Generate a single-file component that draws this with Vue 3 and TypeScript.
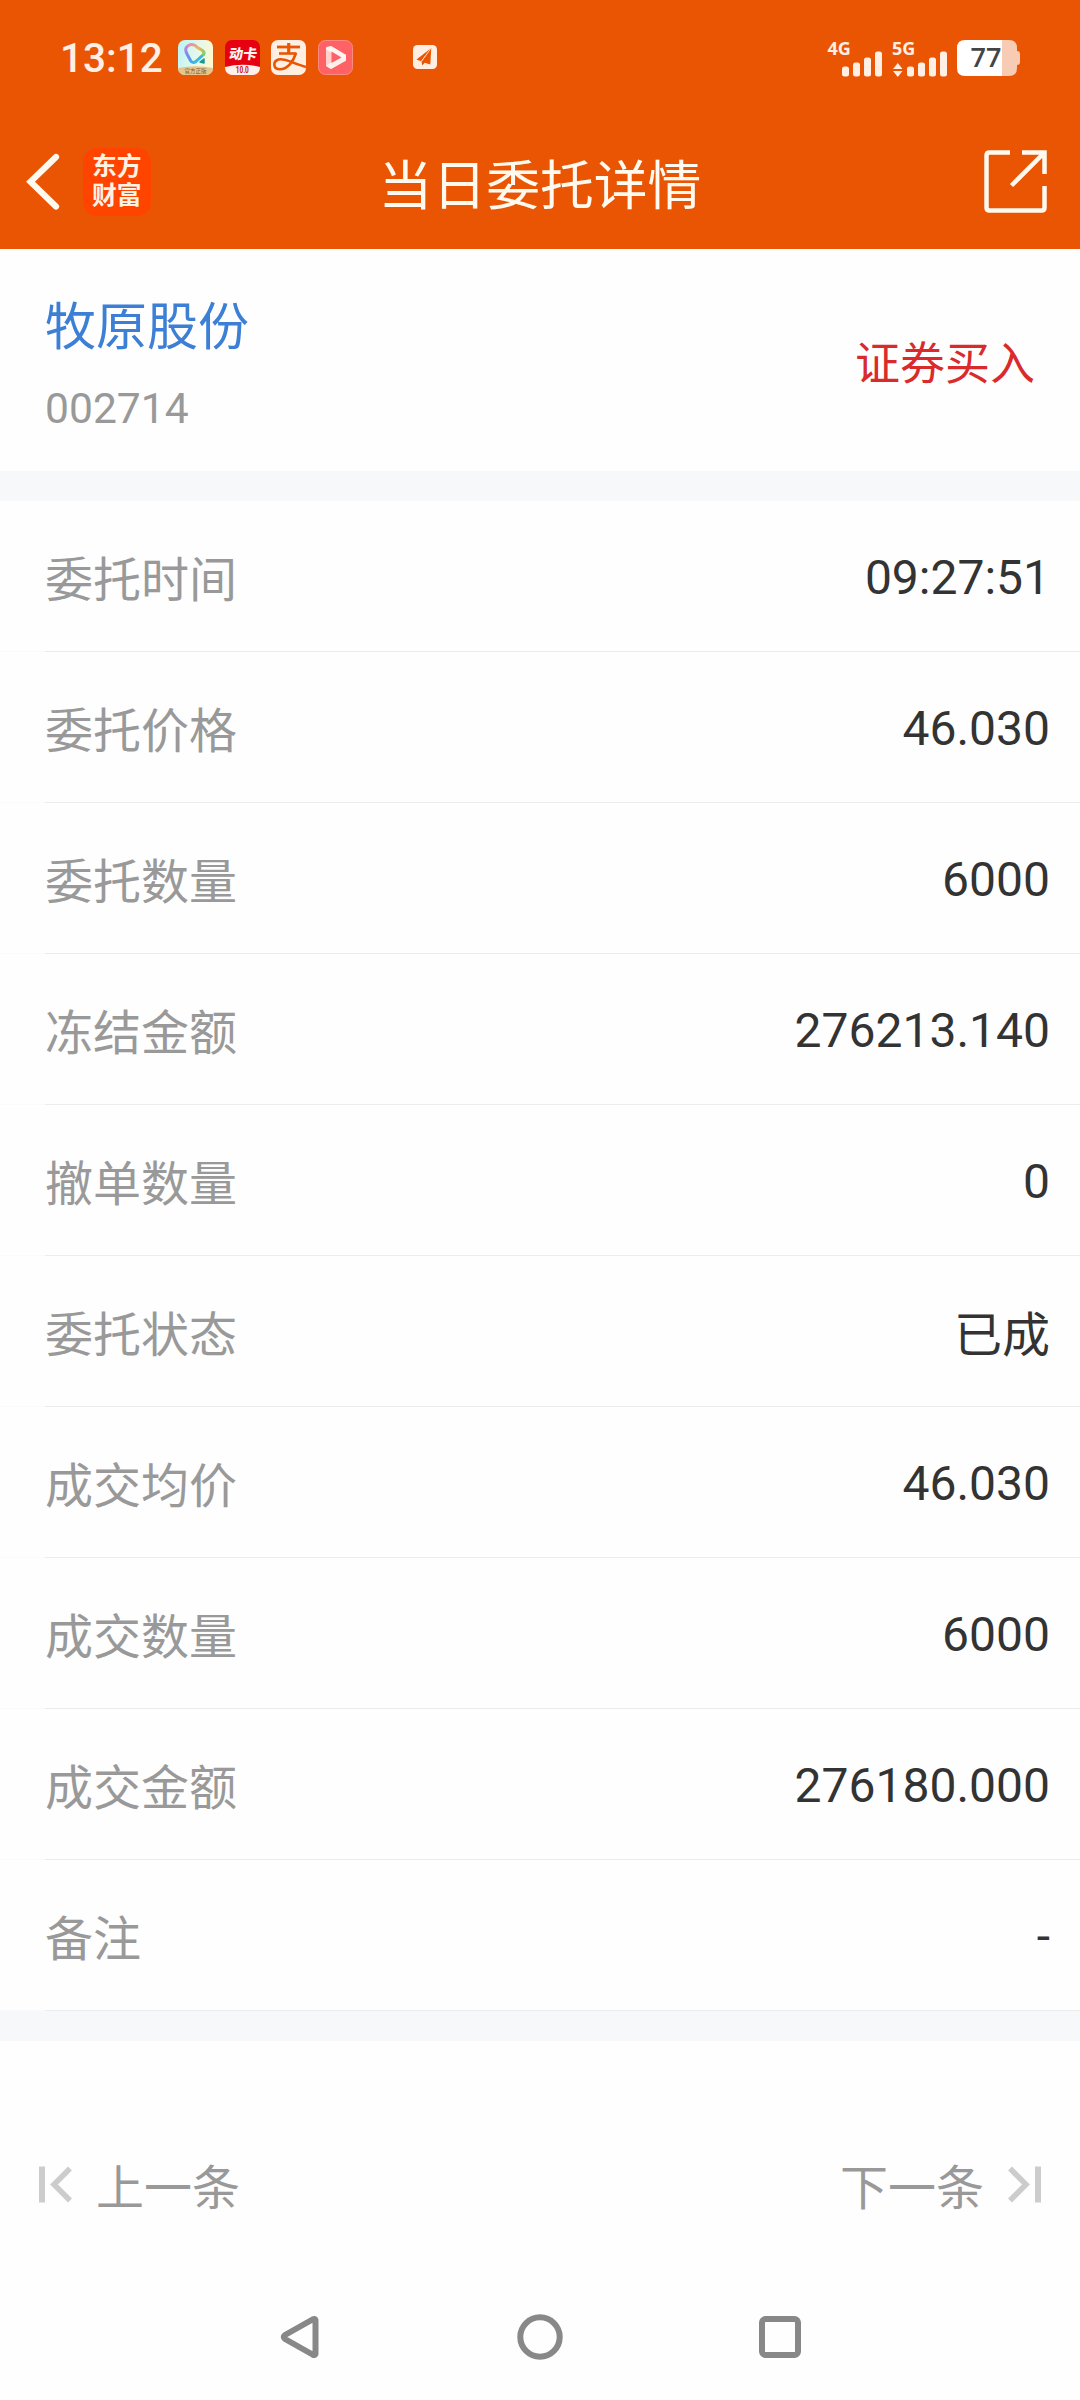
<script setup lang="ts">
interface DetailRow {
  label: string
  value: string
  cjk?: boolean
}

const rows: DetailRow[] = [
  { label: '委托时间', value: '09:27:51' },
  { label: '委托价格', value: '46.030' },
  { label: '委托数量', value: '6000' },
  { label: '冻结金额', value: '276213.140' },
  { label: '撤单数量', value: '0' },
  { label: '委托状态', value: '已成', cjk: true },
  { label: '成交均价', value: '46.030' },
  { label: '成交数量', value: '6000' },
  { label: '成交金额', value: '276180.000' },
  { label: '备注', value: '-' },
]
</script>

<template>
  <div class="screen">
    <header class="top">
      <div class="status">
        <span class="clock">13:12</span>
        <div class="apps">
          <svg width="35" height="35" viewBox="0 0 35 35">
            <defs>
              <linearGradient id="tile" x1="0" y1="0" x2="1" y2="0.3">
                <stop offset="0" stop-color="#b9f3f5" />
                <stop offset="0.6" stop-color="#e4f8ec" />
                <stop offset="1" stop-color="#fbf8d2" />
              </linearGradient>
              <linearGradient id="loop" x1="0" y1="0" x2="0.7" y2="1">
                <stop offset="0" stop-color="#c58be0" />
                <stop offset="0.35" stop-color="#8a86ea" />
                <stop offset="0.7" stop-color="#4f9cf0" />
                <stop offset="1" stop-color="#35c8d8" />
              </linearGradient>
              <linearGradient id="loopWarm" x1="0" y1="0" x2="1" y2="1">
                <stop offset="0" stop-color="#e58ab8" />
                <stop offset="0.5" stop-color="#f0b35c" />
                <stop offset="1" stop-color="#6fd46a" />
              </linearGradient>
              <clipPath id="tileClip"><rect width="35" height="35" rx="7" /></clipPath>
            </defs>
            <g clip-path="url(#tileClip)">
              <rect width="35" height="35" fill="url(#tile)" />
              <path d="M0 28 Q17.500 24.500 35 28 V35 H0Z" fill="#e6c48c" />
              <path d="M10.500 5.500 C6.500 7.500 7.500 11 9 14 L12.500 20.500 C14 23.500 17 23 19 20.500 L25.500 14.500" fill="none" stroke="url(#loop)" stroke-width="3" stroke-linecap="round" />
              <path d="M10.500 5.500 C14 3.500 17 5 19.500 7.500 L24.500 10.500 Q27 12.500 25.500 14.500" fill="none" stroke="url(#loopWarm)" stroke-width="3" stroke-linecap="round" />
              <path d="M22 22 L26 19 V23Z" fill="#169a9a" stroke="#169a9a" stroke-width="1.500" stroke-linejoin="round" />
              <text x="17.500" y="33.300" text-anchor="middle" class="cjk-text" font-size="5.500" fill="#7a5a2c">官方正版</text>
            </g>
          </svg>
          <svg width="35" height="35" viewBox="0 0 35 35">
            <defs><clipPath id="cardClip"><rect width="35" height="35" rx="7" /></clipPath></defs>
            <g clip-path="url(#cardClip)">
              <rect width="35" height="35" fill="#e60012" />
              <path d="M0 27 Q17.500 22.500 35 27 V35 H0Z" fill="#fff0ea" />
              <text transform="translate(17.500 18.800) skewX(-8)" text-anchor="middle" class="cjk-text" font-size="14" font-weight="900" fill="#fff3ec">动卡</text>
              <text transform="translate(17.300 33) scale(0.72 1)" text-anchor="middle" class="num-text" font-size="9" font-weight="700" fill="#c8101c">10.0</text>
            </g>
          </svg>
          <svg width="35" height="35" viewBox="0 0 35 35">
            <rect width="35" height="35" rx="7" fill="#ffefe2" />
            <g fill="none" stroke="#ea5504">
              <path d="M6 7 H29" stroke-width="2.800" />
              <path d="M17.700 3 V13" stroke-width="3.200" />
              <path d="M8 13.500 H25.500" stroke-width="2.600" />
              <path d="M25 13 C22.500 21 17 29 9 29.300 C2 29.300 1.500 21.500 7.500 19.500 C14 18 22 23.500 35 27" stroke-width="2.600" />
            </g>
          </svg>
          <svg width="35" height="35" viewBox="0 0 35 35">
            <rect x="0.500" y="0.500" width="34" height="34" rx="7" fill="#ff6266" stroke="#ff8a80" />
            <path d="M8 7 L13 6 L28 15 V20.500 L13 29 L8 26Z" fill="#ffd0cc" />
            <path d="M13 6 L28 15 V20.500 L24.500 18.500 L8 9.500 V8Z" fill="#fff6f0" />
            <path d="M8 26 L13 29 L28 20.500 L24 16.500 L10 24Z" fill="#fff6f0" opacity="0.850" />
            <path d="M13.500 11.500 L23.500 17.500 L13.500 23Z" fill="#ff6266" />
          </svg>
        </div>
        <svg class="plane" width="24" height="24" viewBox="0 0 24 24">
          <rect width="24" height="24" rx="4.500" fill="#ffefe2" />
          <path d="M18.300 3 L3.500 14.500 L8 16.300Z M18.300 3 L8.500 16.800 L9.200 20.500 L11.700 17.800 L17.300 19.500Z" fill="#ea5504" />
          <path d="M18.300 3 L8.300 16.500" stroke="#ffefe2" stroke-width="0.700" />
        </svg>
        <svg class="signals" width="198" height="52" viewBox="-6 -6 198 52">
          <g fill="#ffefe4">
            <text x="-0.500" y="16.500" class="net-text">4G</text>
            <rect x="14" y="28.500" width="7" height="10" rx="2.500" />
            <rect x="25" y="24.500" width="7" height="14" rx="2.500" />
            <rect x="36" y="19.500" width="7" height="19" rx="2.500" />
            <rect x="47" y="13.500" width="7" height="25" rx="2.500" />
            <text x="64" y="16.500" class="net-text">5G</text>
            <path d="M65 31 L69.800 25 L74.500 31Z M65 33 L69.800 39 L74.500 33Z" />
            <rect x="79" y="28.500" width="7" height="10" rx="2.500" />
            <rect x="90" y="24.500" width="7" height="14" rx="2.500" />
            <rect x="101" y="19.500" width="7" height="19" rx="2.500" />
            <rect x="112" y="13.500" width="7" height="25" rx="2.500" />
          </g>
          <path d="M174 2 H181 Q189 2 189 10 V13 Q192 13 192 16 V24 Q192 27 189 27 V30 Q189 38 181 38 H174Z" fill="#f8ccb4" />
          <path d="M174 2 H137 Q129 2 129 10 V30 Q129 38 137 38 H174Z" fill="#fff" />
          <text x="158" y="29" text-anchor="middle" class="battery-text">77</text>
        </svg>
      </div>
      <div class="bar">
        <div class="bar-side">
          <svg class="back" width="34" height="60" viewBox="0 0 34 60">
            <path d="M30 5 L4.500 29.800 L30 54.500" fill="none" stroke="#fffaf0" stroke-width="6.200" stroke-linecap="round" />
          </svg>
          <div class="brand">东方财富</div>
        </div>
        <h1>当日委托详情</h1>
        <div class="bar-side end">
          <svg width="64" height="64" viewBox="0 0 64 64" fill="none" stroke="#fffaf0" stroke-width="4.500">
            <path d="M26 2.500 H5.500 Q2.500 2.500 2.500 5.500 V57.500 Q2.500 60.500 5.500 60.500 H57.500 Q60.500 60.500 60.500 57.500 V36" />
            <path d="M38 2.500 H60.500 V24 M60 3 L27.500 35.500" />
          </svg>
        </div>
      </div>
    </header>

    <section class="summary">
      <div>
        <div class="name">牧原股份</div>
        <div class="code">002714</div>
      </div>
      <div class="side">证券买入</div>
    </section>

    <main class="list">
      <div v-for="row in rows" :key="row.label" class="row">
        <span class="label">{{ row.label }}</span>
        <span class="value" :class="{ cjk: row.cjk }">{{ row.value }}</span>
      </div>
    </main>
    <div class="band"></div>

    <div class="pager">
      <div class="page-btn">
        <svg width="34" height="37" viewBox="0 0 34 37" fill="none" stroke="#ccc">
          <path d="M3 0.500 V36.500" stroke-width="6" />
          <path d="M31 2.500 L15 18.500 L31 34.500" stroke-width="5.500" />
        </svg>
        <span>上一条</span>
      </div>
      <div class="page-btn">
        <span>下一条</span>
        <svg width="34" height="37" viewBox="0 0 34 37" fill="none" stroke="#ccc">
          <path d="M31 0.500 V36.500" stroke-width="6" />
          <path d="M3 2.500 L19 18.500 L3 34.500" stroke-width="5.500" />
        </svg>
      </div>
    </div>

    <nav class="nav">
      <svg width="40" height="46" viewBox="0 0 40 46" fill="none" stroke="#888" stroke-width="6" stroke-linejoin="round">
        <path d="M35.500 6 Q35 4.200 32.500 5.500 L5 21 Q2.500 23 5 25 L32.500 40.500 Q35 41.800 35.500 40Z" />
      </svg>
      <svg width="46" height="46" viewBox="0 0 46 46" fill="none" stroke="#888" stroke-width="6">
        <circle cx="23" cy="23" r="19.700" />
      </svg>
      <svg width="42" height="42" viewBox="0 0 42 42" fill="none" stroke="#888" stroke-width="6">
        <rect x="3" y="3" width="36" height="36" rx="3.500" />
      </svg>
    </nav>
  </div>
</template>

<style>
body {
  margin: 0;
  background: #fefefe;
}
</style>

<style scoped>
.screen {
  width: 1080px;
  height: 2400px;
  overflow: hidden;
  display: flex;
  flex-direction: column;
  background: #fefefe;
  font-family: 'Noto Sans CJK SC', sans-serif;
}
svg {
  display: block;
  flex: none;
}
.cjk-text {
  font-family: 'Noto Sans CJK SC', sans-serif;
}
.num-text {
  font-family: Roboto, sans-serif;
}
.top {
  height: 249px;
  background: #ea5504;
}
.status {
  height: 114px;
  display: flex;
  align-items: center;
  padding: 0 60px;
}
.clock {
  width: 118px;
  padding-top: 1px;
  font: 500 40.5px/60px Roboto, sans-serif;
  color: #ffefe4;
}
.apps {
  display: flex;
  gap: 11.7px;
}
.plane {
  margin-left: 60px;
}
.signals {
  margin-left: auto;
  margin-top: 1px;
}
.net-text {
  font: 700 18px 'Open Sans', sans-serif;
}
.battery-text {
  font: 600 27px 'Open Sans', sans-serif;
  fill: #444;
}
.bar {
  height: 135px;
  display: flex;
  align-items: center;
  justify-content: space-between;
  padding: 0 32px 0 26px;
}
.bar-side {
  width: 200px;
  display: flex;
  align-items: center;
}
.bar-side.end {
  justify-content: flex-end;
}
.brand {
  box-sizing: border-box;
  width: 68px;
  height: 68px;
  margin-left: 23px;
  padding: 2px 9px 0;
  border-radius: 14px;
  background: #ff4400;
  color: #fff4e4;
  font-size: 24.8px;
  font-weight: 700;
  line-height: 29.5px;
  word-break: break-all;
}
h1 {
  margin: 0 0 0 6px;
  font-size: 53.8px;
  line-height: 80px;
  font-weight: 400;
  color: #fffaf0;
}
.summary {
  height: 222px;
  box-sizing: border-box;
  padding: 0 45px;
  display: flex;
  align-items: center;
  justify-content: space-between;
}
.name {
  font-size: 51px;
  line-height: 72px;
  color: #3c7fd5;
}
.code {
  margin: 19px 0 -5px;
  font: 42.6px/60px Roboto, sans-serif;
  color: #999;
}
.side {
  padding-top: 1px;
  font-size: 45px;
  line-height: 66px;
  color: #d92b2b;
}
.list {
  border-top: 30px solid #f6f8fa;
}
.row {
  height: 151px;
  box-sizing: border-box;
  padding: 0 30px 0 45px;
  display: flex;
  align-items: center;
  justify-content: space-between;
  font-size: 48px;
  line-height: 72px;
  background: linear-gradient(to right, #fafafa 45px, #ebecee 45px) bottom / 100% 1px no-repeat;
}
.label {
  padding-bottom: 1px;
  color: #999;
}
.value {
  padding-top: 2px;
  font-family: Roboto, sans-serif;
  color: #333;
}
.value.cjk {
  padding: 0 0 1px;
  font-family: 'Noto Sans CJK SC', sans-serif;
}
.band {
  height: 30px;
  background: #f6f8fa;
}
.pager {
  height: 233px;
  box-sizing: border-box;
  padding: 54px 39px 0;
  display: flex;
  align-items: center;
  justify-content: space-between;
}
.page-btn {
  display: flex;
  align-items: center;
  gap: 23px;
  font-size: 48px;
  line-height: 72px;
  color: #999;
}
.page-btn span {
  padding-bottom: 1px;
}
.nav {
  height: 126px;
  box-sizing: border-box;
  padding: 0 279px 0 280px;
  display: flex;
  align-items: center;
  justify-content: space-between;
}
</style>
